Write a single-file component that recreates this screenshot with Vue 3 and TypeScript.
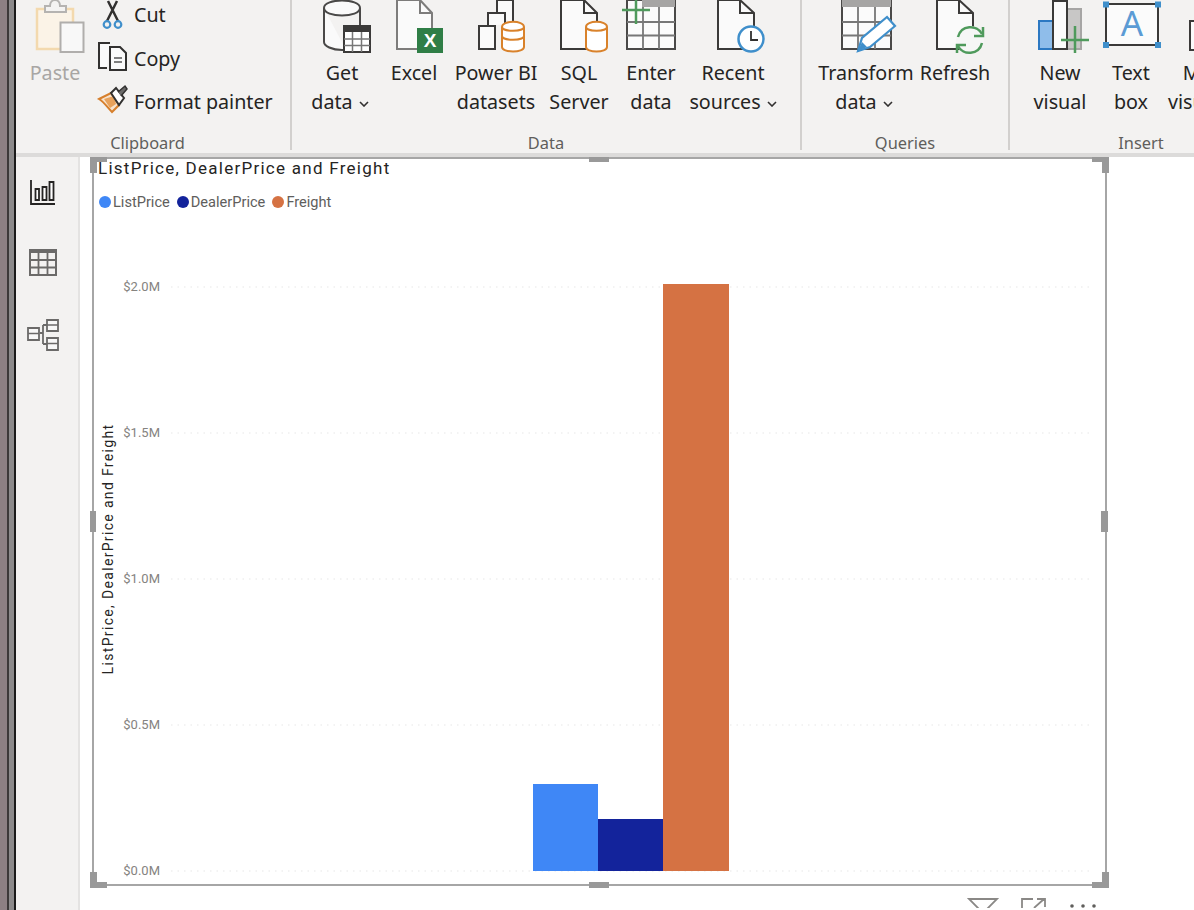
<script setup lang="ts">
const ticks = [
  { label: '$2.0M', y: 287 },
  { label: '$1.5M', y: 433 },
  { label: '$1.0M', y: 579 },
  { label: '$0.5M', y: 725 },
  { label: '$0.0M', y: 871 },
]
const bars = [
  { x: 533, y: 784, w: 65, color: '#3f87f6' },
  { x: 598, y: 819, w: 65, color: '#13239b' },
  { x: 663, y: 284, w: 66, color: '#d57243' },
]
const legend = [
  { name: 'ListPrice', color: '#3f87f6' },
  { name: 'DealerPrice', color: '#13239b' },
  { name: 'Freight', color: '#d57243' },
]
</script>

<template>
  <div class="app">
    <div class="edge"></div>
    <div class="main">
      <header class="ribbon">
        <section class="group clip-group">
          <div class="tools">
            <div class="btn paste">
              <svg class="ico" viewBox="16 0 78 56">
                <path d="M37 9H73V49H37Z" fill="#fbf3e7" stroke="#f3d9ae" stroke-width="2.5" />
                <path d="M45 12V6H50C50 -2 60 -2 60 6H66V12Z" fill="#f4f3f2" stroke="#b5b3b1" stroke-width="2" />
                <path d="M60.500 22.500H83.500V52H60.500Z" fill="#f8f8f8" stroke="#b0aeac" stroke-width="2" />
              </svg>
              <span class="line muted">Paste</span>
            </div>
            <div class="small-col">
              <div class="small-row">
                <svg class="small-ico" viewBox="96 -7 34 44">
                  <path d="M108 1L118 21M117 1L107 21" fill="none" stroke="#323130" stroke-width="2.500" />
                  <circle cx="107" cy="24.500" r="3.300" fill="none" stroke="#3f8fcb" stroke-width="2.200" />
                  <circle cx="118" cy="24.500" r="3.300" fill="none" stroke="#3f8fcb" stroke-width="2.200" />
                </svg>
                <span>Cut</span>
              </div>
              <div class="small-row">
                <svg class="small-ico" viewBox="96 37 34 44">
                  <path d="M107 69H99V44H110" fill="#fafafa" stroke="#323130" stroke-width="2" />
                  <path d="M110 48H120L126 54V71H110Z" fill="#fafafa" stroke="#323130" stroke-width="2" />
                  <path d="M114 59H122M114 63H122" stroke="#555" stroke-width="1.500" />
                </svg>
                <span>Copy</span>
              </div>
              <div class="small-row">
                <svg class="small-ico" viewBox="96 80 34 44">
                  <path d="M99 99L111 93L119 105L112 112C108 108 104 102 99 99Z" fill="#f7e3cd" stroke="#d67f2c" stroke-width="2" />
                  <path d="M104 99L114 96L116 104L110 108Z" fill="#e8a25c" />
                  <path d="M111 93L116 88L124 98L119 105Z" fill="#fff" stroke="#323130" stroke-width="2" />
                  <path d="M118 92L125 86L127 89L121 96" fill="#6b6a69" stroke="#323130" stroke-width="1.500" />
                </svg>
                <span>Format painter</span>
              </div>
            </div>
          </div>
          <div class="group-label">Clipboard</div>
        </section>

        <section class="group data-group">
          <div class="tools">
            <div class="btn w-get">
              <svg class="ico" viewBox="302 0 80 56">
                <path d="M324 8V42C324 46 332 50 342 50H346M360 8V26M324 8C324 -2 360 -2 360 8C360 18 324 18 324 8Z" fill="#fafafa" stroke="#4a4948" stroke-width="2" />
                <path d="M344 26H370V52H344Z" fill="#fff" stroke="#3b3a39" stroke-width="2" />
                <path d="M344 26H370V32H344Z" fill="#3b3a39" />
                <path d="M352.500 32V52M361.500 32V52M344 39H370M344 45.500H370" stroke="#777" stroke-width="1.500" />
              </svg>
              <span class="line">Get</span>
              <span class="line with-chev">data<svg class="chev" viewBox="0 0 10 6"><path d="M1 1L5 5L9 1" fill="none" stroke="#323130" stroke-width="1.600" /></svg></span>
            </div>
            <div class="btn w-excel">
              <svg class="ico" viewBox="382 0 64 56">
                <path d="M397 0V49H432V13L420 0Z" fill="#fafafa" stroke="#7d7c7b" stroke-width="2" />
                <path d="M420 0V13H432" fill="none" stroke="#7d7c7b" stroke-width="2" />
                <rect x="417" y="28" width="26" height="25" fill="#2f7e46" />
                <text x="430" y="47" class="xl">X</text>
              </svg>
              <span class="line">Excel</span>
            </div>
            <div class="btn w-pbi">
              <svg class="ico" viewBox="446 0 100 56">
                <path d="M497 13V0H513V24" fill="#fafafa" stroke="#3b3a39" stroke-width="2" />
                <path d="M488 26V13H505V24" fill="#fafafa" stroke="#3b3a39" stroke-width="2" />
                <path d="M479 26H495V49H479Z" fill="#fafafa" stroke="#3b3a39" stroke-width="2" />
                <path d="M502 27V47C502 53 524 53 524 47V27C524 20 502 20 502 27Z" fill="#fff" stroke="#d9822b" stroke-width="2" />
                <path d="M502 27C502 32 524 32 524 27M502 36C502 41 524 41 524 36" fill="none" stroke="#d9822b" stroke-width="2" />
              </svg>
              <span class="line">Power BI</span>
              <span class="line">datasets</span>
            </div>
            <div class="btn w-sql">
              <svg class="ico" viewBox="546 0 66 56">
                <path d="M561 0V49H597V13L584 0Z" fill="#fafafa" stroke="#3b3a39" stroke-width="2" />
                <path d="M584 0V13H597" fill="none" stroke="#3b3a39" stroke-width="2" />
                <path d="M586 27V47C586 53 607 53 607 47V27C607 20 586 20 586 27Z" fill="#fff" stroke="#d9822b" stroke-width="2" />
                <path d="M586 27C586 32 607 32 607 27" fill="none" stroke="#d9822b" stroke-width="2" />
              </svg>
              <span class="line">SQL</span>
              <span class="line">Server</span>
            </div>
            <div class="btn w-enter">
              <svg class="ico" viewBox="612 0 78 56">
                <path d="M627 0H675V49H627Z" fill="#fbfbfb" stroke="#4a4948" stroke-width="2" />
                <rect x="642" y="0" width="33" height="7" fill="#a6a5a4" />
                <path d="M643 7V49M659 7V49M627 22H675M627 35.500H675" stroke="#777" stroke-width="1.800" />
                <path d="M622 10H650M636 -2V24" stroke="#4f9a5c" stroke-width="2.500" />
              </svg>
              <span class="line">Enter</span>
              <span class="line">data</span>
            </div>
            <div class="btn w-recent">
              <svg class="ico" viewBox="690 0 86 56">
                <path d="M718 0V49H754V13L740 0Z" fill="#fafafa" stroke="#3b3a39" stroke-width="2" />
                <path d="M740 0V13H754" fill="none" stroke="#3b3a39" stroke-width="2" />
                <circle cx="751" cy="39" r="12.500" fill="#fff" stroke="#3f8fcb" stroke-width="2.500" />
                <path d="M751 31V40H758" fill="none" stroke="#323130" stroke-width="1.800" />
              </svg>
              <span class="line">Recent</span>
              <span class="line">sources<svg class="chev" viewBox="0 0 10 6"><path d="M1 1L5 5L9 1" fill="none" stroke="#323130" stroke-width="1.600" /></svg></span>
            </div>
          </div>
          <div class="group-label">Data</div>
        </section>

        <section class="group query-group">
          <div class="tools">
            <div class="btn w-transform">
              <svg class="ico" viewBox="817 0 98 56">
                <path d="M842 0H891V49H842Z" fill="#fbfbfb" stroke="#4a4948" stroke-width="2" />
                <rect x="842" y="0" width="49" height="7" fill="#a6a5a4" />
                <path d="M858 7V49M875 7V49M842 22H891M842 35.500H891" stroke="#777" stroke-width="1.800" />
                <path d="M858 51L862 38L887 17L895 26L870 47Z" fill="#fff" stroke="#3f8fcb" stroke-width="2.200" />
                <path d="M858 51L862 42L867 47Z" fill="#3f8fcb" />
              </svg>
              <span class="line">Transform</span>
              <span class="line with-chev">data<svg class="chev" viewBox="0 0 10 6"><path d="M1 1L5 5L9 1" fill="none" stroke="#323130" stroke-width="1.600" /></svg></span>
            </div>
            <div class="btn w-refresh">
              <svg class="ico" viewBox="915 0 80 56">
                <path d="M937 0V49H973V13L959 0Z" fill="#fafafa" stroke="#3b3a39" stroke-width="2" />
                <path d="M959 0V13H973" fill="none" stroke="#3b3a39" stroke-width="2" />
                <circle cx="970" cy="40" r="14" fill="#f6f6f6" />
                <path d="M958 37C961 25 977 24 982 34M982 43C979 55 963 56 958 46" fill="none" stroke="#4f9a5c" stroke-width="2.500" />
                <path d="M983 27V36H974M957 53V45H966" fill="none" stroke="#4f9a5c" stroke-width="2.500" />
              </svg>
              <span class="line">Refresh</span>
            </div>
          </div>
          <div class="group-label">Queries</div>
        </section>

        <section class="group insert-group">
          <div class="tools">
            <div class="btn w-new">
              <svg class="ico" viewBox="1025 0 70 56">
                <path d="M1067 9H1081V49H1067Z" fill="#c8c7c6" stroke="#a6a5a4" stroke-width="2" />
                <path d="M1039 21H1053V49H1039Z" fill="#8fbdea" stroke="#2b78c2" stroke-width="2" />
                <path d="M1053 1H1067V49H1053Z" fill="#fbfbfb" stroke="#3b3a39" stroke-width="2" />
                <path d="M1061 40H1089M1075 26V53" stroke="#4f9a5c" stroke-width="2.500" />
              </svg>
              <span class="line">New</span>
              <span class="line">visual</span>
            </div>
            <div class="btn w-text">
              <svg class="ico" viewBox="1095 0 72 56">
                <rect x="1106" y="4" width="52" height="41" fill="#fbfbfb" stroke="#3b3a39" stroke-width="2" />
                <text x="1132" y="36" class="abox">A</text>
                <rect x="1103" y="1.500" width="6" height="6" fill="#3f8fcb" />
                <rect x="1155" y="1.500" width="6" height="6" fill="#3f8fcb" />
                <rect x="1103" y="42" width="6" height="6" fill="#3f8fcb" />
                <rect x="1155" y="42" width="6" height="6" fill="#3f8fcb" />
              </svg>
              <span class="line">Text</span>
              <span class="line">box</span>
            </div>
            <div class="btn w-more">
              <svg class="ico" viewBox="1167 0 80 56">
                <path d="M1190 21H1212V50H1190Z" fill="#fbfbfb" stroke="#3b3a39" stroke-width="2" />
              </svg>
              <span class="line">More</span>
              <span class="line">visuals<svg class="chev" viewBox="0 0 10 6"><path d="M1 1L5 5L9 1" fill="none" stroke="#323130" stroke-width="1.600" /></svg></span>
            </div>
          </div>
          <div class="group-label">Insert</div>
        </section>
      </header>

      <div class="body">
        <nav class="nav">
          <svg class="nav-ico" viewBox="16 172 62 40">
            <path d="M31 180V204H55" fill="none" stroke="#252423" stroke-width="1.800" />
            <path d="M35.500 189H39V200H35.500ZM42.500 187H46.500V200H42.500ZM49.500 182H53.500V200H49.500Z" fill="#fff" stroke="#252423" stroke-width="1.800" />
          </svg>
          <svg class="nav-ico" viewBox="16 242 62 40">
            <path d="M30 250H56V275H30Z" fill="none" stroke="#6b6a69" stroke-width="2" />
            <path d="M30 250H56V253H30Z" fill="#6b6a69" />
            <path d="M38.500 253V275M47.500 253V275M30 260H56M30 267.500H56" stroke="#6b6a69" stroke-width="1.800" />
          </svg>
          <svg class="nav-ico" viewBox="16 312 62 40">
            <path d="M40 333H43M43 325V344M43 325H47M43 344H47" fill="none" stroke="#6b6a69" stroke-width="1.800" />
            <path d="M28 328H39V340H28ZM47 320H58V331H47ZM47 338H58V350H47Z" fill="#f8f8f8" stroke="#6b6a69" stroke-width="1.800" />
            <path d="M28 333.500H39M47 325H58M47 343.500H58" stroke="#6b6a69" stroke-width="1.500" />
          </svg>
        </nav>

        <main class="canvas">
          <div class="visual">
            <div class="title">ListPrice, DealerPrice and Freight</div>
            <div class="legend">
              <span v-for="item in legend" :key="item.name" class="legend-item">
                <i class="dot" :style="{ background: item.color }"></i>{{ item.name }}
              </span>
            </div>
            <svg class="chart" viewBox="94 222 1011 662">
              <text x="113" y="549" class="y-title" transform="rotate(-90 113 549)">ListPrice, DealerPrice and Freight</text>
              <g v-for="tick in ticks" :key="tick.label">
                <text x="160" :y="tick.y + 4" class="tick">{{ tick.label }}</text>
                <line x1="171" :y1="tick.y" x2="1090" :y2="tick.y" class="grid" />
              </g>
              <rect v-for="bar in bars" :key="bar.x" :x="bar.x" :y="bar.y" :width="bar.w" :height="871 - bar.y" :fill="bar.color" />
            </svg>

            <i class="handle corner tl"></i>
            <i class="handle corner tr"></i>
            <i class="handle corner bl"></i>
            <i class="handle corner br"></i>
            <i class="handle mid-h top"></i>
            <i class="handle mid-h bottom"></i>
            <i class="handle mid-v left"></i>
            <i class="handle mid-v right"></i>
          </div>
          <svg class="visual-tools" viewBox="960 896 146 14">
            <path d="M970 901H998L987 912H981Z" fill="none" stroke="#8a8886" stroke-width="1.800" />
            <path d="M1034 901H1023V914M1035 910L1045 901M1038 901H1046V909" fill="none" stroke="#8a8886" stroke-width="1.800" />
            <circle cx="1073" cy="908" r="1.800" fill="#605e5c" />
            <circle cx="1084" cy="908" r="1.800" fill="#605e5c" />
            <circle cx="1095" cy="908" r="1.800" fill="#605e5c" />
          </svg>
        </main>
      </div>
    </div>
  </div>
</template>

<style>
html,
body {
  margin: 0;
  background: #fff;
}
</style>

<style scoped>
.app {
  display: flex;
  width: 1194px;
  height: 910px;
  overflow: hidden;
  font-family: "Noto Sans", "Open Sans", sans-serif;
  color: #252423;
}
.edge {
  flex: none;
  box-sizing: border-box;
  width: 16px;
  background: linear-gradient(to right, #8d7f83 0 7px, #3d3839 7px 9px, #8c8a8b 9px 14px, #1b1b1b 14px 16px);
}
.main {
  display: flex;
  flex: 1;
  flex-direction: column;
  min-width: 0;
}
.ribbon {
  display: flex;
  flex: none;
  height: 153px;
  overflow: hidden;
  background: #f3f2f1;
  border-bottom: 4px solid #dcdbda;
}
.group {
  display: flex;
  flex: none;
  flex-direction: column;
  box-sizing: border-box;
  height: 150px;
  border-right: 2px solid #d2d0ce;
}
.clip-group {
  width: 276px;
}
.data-group {
  width: 510px;
  padding-left: 10px;
}
.query-group {
  width: 208px;
  padding-left: 15px;
}
.insert-group {
  width: 262px;
  padding-left: 15px;
  border-right: 0;
}
.tools {
  display: flex;
  flex: none;
  height: 128px;
}
.group-label {
  flex: none;
  margin-top: 5px;
  font-size: 16.400px;
  line-height: 18px;
  color: #605e5c;
  text-align: center;
  transform: translateY(1px);
}
.clip-group .group-label {
  padding-right: 11px;
}
.data-group .group-label {
  margin-left: -10px;
}
.query-group .group-label {
  margin-left: -15px;
}
.insert-group .group-label {
  margin-left: -15px;
}
.btn {
  display: flex;
  flex: none;
  flex-direction: column;
  align-items: center;
  white-space: nowrap;
}
.ico {
  display: block;
  width: 100%;
  height: 56px;
  margin-bottom: 2px;
  overflow: visible;
}
.line {
  font-size: 19.700px;
  line-height: 29px;
}
.with-chev {
  margin-left: -4px;
}
.muted {
  color: #a8a6a4;
}
.chev {
  width: 10px;
  height: 6px;
  margin-left: 6px;
  vertical-align: 2px;
}
.paste { width: 78px; }
.w-get { width: 80px; }
.w-excel { width: 64px; }
.w-pbi { width: 100px; }
.w-sql { width: 66px; }
.w-enter { width: 78px; }
.w-recent { width: 86px; }
.w-transform { width: 98px; }
.w-refresh { width: 80px; }
.w-new { width: 70px; }
.w-text { width: 72px; }
.w-more { width: 80px; }
.small-col {
  display: flex;
  flex-direction: column;
  margin-top: -7px;
  margin-left: 2px;
}
.small-row {
  display: flex;
  align-items: center;
  gap: 4px;
  height: 43.500px;
  font-size: 19.700px;
  white-space: nowrap;
}
.small-ico {
  display: block;
  width: 34px;
  height: 44px;
}
.xl {
  fill: #fff;
  font-family: "Liberation Sans", sans-serif;
  font-size: 19px;
  font-weight: 700;
  text-anchor: middle;
}
.abox {
  fill: #5b9bd5;
  font-family: "Noto Sans", sans-serif;
  font-size: 35px;
  text-anchor: middle;
}
.body {
  display: flex;
  flex: 1;
  min-height: 0;
}
.nav {
  display: flex;
  flex: none;
  flex-direction: column;
  gap: 30px;
  box-sizing: border-box;
  width: 64px;
  padding-top: 15px;
  background: #f3f2f1;
  border-right: 2px solid #e4e3e2;
}
.nav-ico {
  display: block;
  flex: none;
  width: 62px;
  height: 40px;
}
.canvas {
  flex: 1;
  min-width: 0;
  padding-left: 12px;
  background: #fff;
}
.visual {
  position: relative;
  display: flex;
  flex-direction: column;
  box-sizing: border-box;
  width: 1015px;
  height: 729px;
  border: 2px solid #a6a6a6;
}
.title {
  height: 22px;
  padding-left: 4px;
  font-family: Roboto, sans-serif;
  font-size: 17px;
  line-height: 18px;
  letter-spacing: 1.260px;
  color: #252423;
  white-space: nowrap;
}
.legend {
  display: flex;
  gap: 7px;
  height: 41px;
  padding-left: 5px;
  align-items: center;
  font-family: Roboto, sans-serif;
  font-size: 14.600px;
  color: #605e5c;
  white-space: nowrap;
}
.legend-item {
  display: flex;
  align-items: center;
  gap: 2px;
}
.dot {
  width: 12px;
  height: 12px;
  border-radius: 50%;
}
.chart {
  display: block;
  width: 1011px;
  height: 662px;
}
.y-title {
  fill: #252423;
  font-family: Roboto, sans-serif;
  font-size: 14px;
  letter-spacing: 1.330px;
  text-anchor: middle;
}
.tick {
  fill: #85837f;
  font-family: Roboto, sans-serif;
  font-size: 13px;
  text-anchor: end;
}
.grid {
  stroke: #e8e8e8;
  stroke-width: 1.200;
  stroke-dasharray: 1.500 5;
}
.handle {
  position: absolute;
  display: block;
  background: #999;
}
.corner {
  width: 17px;
  height: 16px;
  background: none;
  border: 0 solid #999;
  box-sizing: border-box;
}
.tl { left: -4px; top: -2px; border-width: 5px 0 0 7px; }
.tr { right: -4px; top: -2px; border-width: 5px 7px 0 0; }
.bl { left: -4px; bottom: -4px; border-width: 0 0 6px 7px; }
.br { right: -4px; bottom: -4px; border-width: 0 7px 6px 0; }
.mid-h {
  left: 495px;
  width: 20px;
  height: 5px;
}
.top { top: -2px; }
.bottom { bottom: -4px; height: 6px; }
.mid-v {
  top: 352px;
  width: 6px;
  height: 21px;
}
.left { left: -4px; }
.right { right: -3px; width: 7px; }
.visual-tools {
  display: block;
  width: 146px;
  height: 14px;
  margin: 8px 0 0 867px;
  overflow: hidden;
}
</style>
